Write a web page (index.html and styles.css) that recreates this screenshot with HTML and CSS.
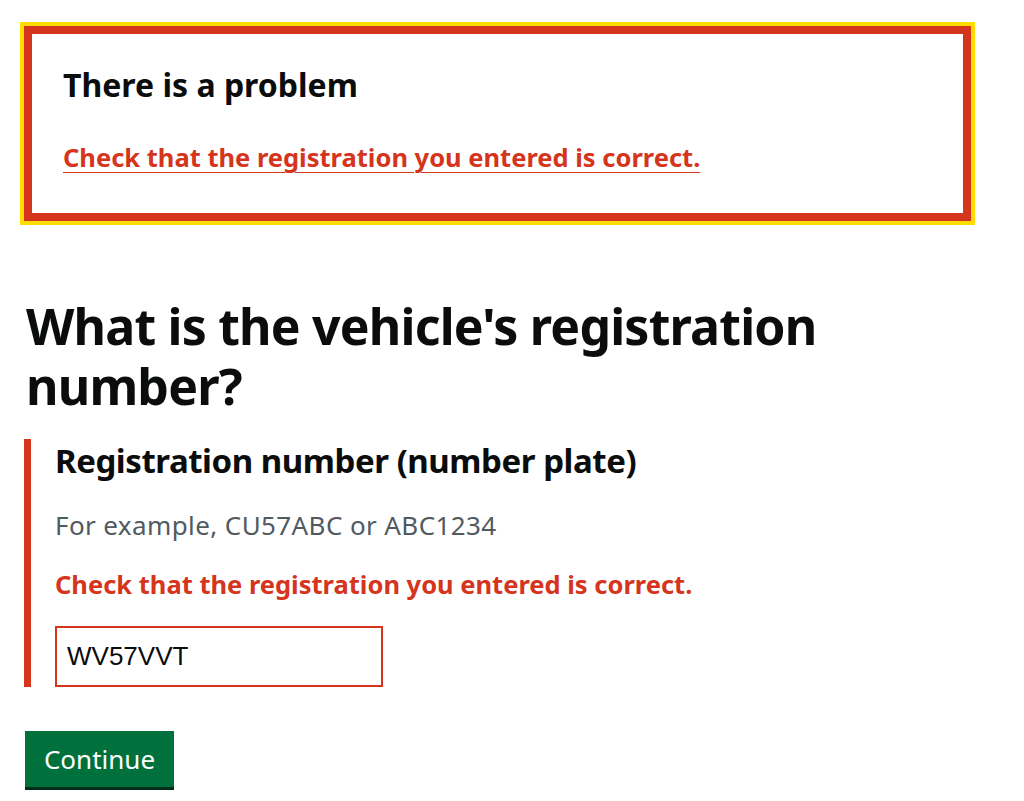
FILE: index.html
```html
<!DOCTYPE html>
<html lang="en">
<head>
<meta charset="utf-8">
<title>What is the vehicle's registration number?</title>
<link rel="stylesheet" href="styles.css">
</head>
<body>
<main class="page">
  <div class="error-summary" role="alert">
    <h2 class="error-summary__title">There is a problem</h2>
    <a class="error-summary__link" href="#reg">Check that the registration you entered is correct.</a>
  </div>
  <h1 class="heading">What is the vehicle's registration number?</h1>
  <div class="form-group form-group--error">
    <label class="label" for="reg">Registration number (number plate)</label>
    <div class="hint">For example, CU57ABC or ABC1234</div>
    <p class="error-message">Check that the registration you entered is correct.</p>
    <input class="input input--error" id="reg" type="text" value="WV57VVT">
  </div>
  <button class="button" type="submit">Continue</button>
</main>
</body>
</html>
```

FILE: styles.css
```css
* { box-sizing: border-box; }
html, body { margin: 0; padding: 0; background: #fff; }
body {
  font-family: "Noto Sans", "Liberation Sans", sans-serif;
  color: #0b0c0c;
}
.page {
  padding: 26px 0 0 24px;
  display: flex;
  flex-direction: column;
  align-items: flex-start;
}
.error-summary {
  width: 947px;
  border: 8px solid #d4351c;
  outline: 4px solid #ffdd00;
  padding: 31px 30px 40px 31px;
}
.error-summary__title {
  margin: 0 0 36px;
  font-size: 32px;
  line-height: 40px;
  font-weight: 700;
}
.error-summary__link {
  display: inline-block;
  font-size: 25.5px;
  line-height: 32px;
  font-weight: 700;
  color: #d4351c;
  text-decoration: underline;
  text-decoration-thickness: 1px;
  text-underline-offset: 5px;
}
.heading {
  margin: 75px 0 23px 2px;
  font-size: 50px;
  line-height: 60px;
  letter-spacing: -0.8px;
  font-weight: 700;
}
.form-group {
  border-left: 7px solid #d4351c;
  padding: 2px 0 0 24px;
  display: flex;
  flex-direction: column;
  align-items: flex-start;
}
.label {
  font-size: 33px;
  line-height: 40px;
  letter-spacing: -0.45px;
  font-weight: 700;
}
.hint {
  margin-top: 29px;
  font-size: 26px;
  line-height: 30px;
  letter-spacing: 0.4px;
  color: #505a5f;
}
.error-message {
  margin: 28px 0 0;
  font-size: 25.5px;
  line-height: 32px;
  font-weight: 700;
  color: #d4351c;
}
.input {
  margin-top: 26px;
  width: 328px;
  height: 61px;
  border: 2px solid #d4351c;
  border-radius: 0;
  padding: 0 10px;
  font-family: "Liberation Sans", Arial, sans-serif;
  font-size: 26px;
  color: #0b0c0c;
  background: #fff;
  outline: none;
}
.button {
  margin: 44px 0 0 1px;
  width: 149px;
  height: 59px;
  border: 0;
  border-radius: 0;
  background: #00703c;
  box-shadow: inset 0 -3px 0 #002d18;
  color: #fff;
  font-family: "Noto Sans", "Liberation Sans", sans-serif;
  font-size: 26px;
  line-height: 1;
  padding: 0 0 3px;
  cursor: pointer;
}
```
